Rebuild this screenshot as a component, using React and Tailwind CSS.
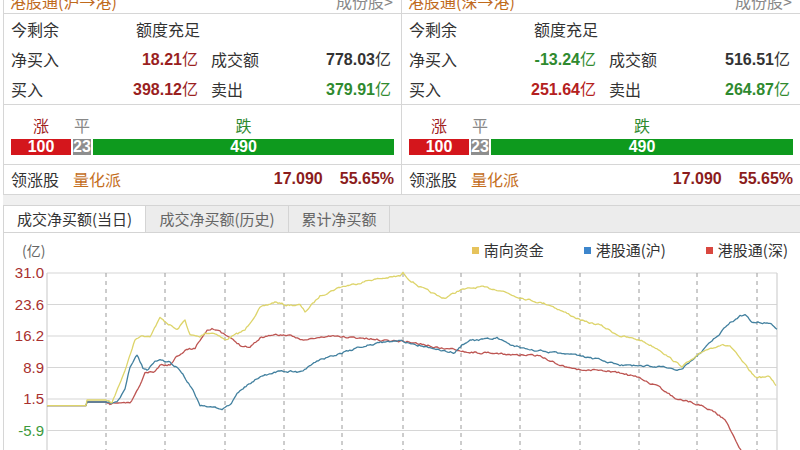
import React from "react";

const CJK = "font-['Noto_Sans_CJK_SC','Noto_Sans',sans-serif]";
const NUM = "font-['Liberation_Sans',Arial,sans-serif] font-bold";

const panels = [
  {
    title: "港股通(沪→港)",
    net: { v: "18.21", c: "text-[#9a1f1f]" },
    turnover: "778.03",
    buy: { v: "398.12", c: "text-[#9a1f1f]" },
    sell: { v: "379.91", c: "text-[#2f8a2f]" },
    border: "border-l border-r",
  },
  {
    title: "港股通(深→港)",
    net: { v: "-13.24", c: "text-[#2f8a2f]" },
    turnover: "516.51",
    buy: { v: "251.64", c: "text-[#b42020]" },
    sell: { v: "264.87", c: "text-[#2f8a2f]" },
    border: "",
  },
];

function Amount({ value, color }) {
  return (
    <span className={`${color} whitespace-nowrap`}>
      <span className={NUM}>{value}</span>
      <span className={CJK}>亿</span>
    </span>
  );
}

function Panel({ p, width }) {
  return (
    <div className={`${width} ${p.border} border-[#d6d6d6] flex flex-col text-[16px] text-[#333] ${CJK}`}>
      {/* title row, scrolled partly out of view */}
      <div className="h-[14px] overflow-hidden border-b border-[#d6d6d6]">
        <div className="-mt-[10px] h-[22px] leading-[22px] flex justify-between pl-[6px] pr-[8px]">
          <span className="text-[#c06a1c]">{p.title}</span>
          <span className="text-[#888]">成份股&gt;</span>
        </div>
      </div>

      <div className="pl-[7px] pr-[10px]">
        <div className="h-[30px] flex items-center">
          <span className="w-[125px]">今剩余</span>
          <span>额度充足</span>
        </div>
        <div className="h-[30px] flex items-center">
          <span className="w-[125px]">净买入</span>
          <span className="w-[62px] text-right">
            <Amount value={p.net.v} color={p.net.c} />
          </span>
          <span className="ml-[13px]">成交额</span>
          <span className="flex-1 text-right">
            <Amount value={p.turnover} color="text-[#333]" />
          </span>
        </div>
        <div className="h-[30px] flex items-center">
          <span className="w-[100px]">买入</span>
          <span className="w-[87px] text-right">
            <Amount value={p.buy.v} color={p.buy.c} />
          </span>
          <span className="ml-[13px]">卖出</span>
          <span className="flex-1 text-right">
            <Amount value={p.sell.v} color={p.sell.c} />
          </span>
        </div>
      </div>

      <div className="h-[61px] border-t border-b border-[#d6d6d6] pl-[7px] pr-[7px] pt-[8px]">
        <div className="flex gap-[2px] h-[24px] items-center">
          <span className="w-[60px] text-center text-[#a02020]">涨</span>
          <span className="w-[18px] text-center text-[#888]">平</span>
          <span className="flex-1 text-center text-[#2f8a2f]">跌</span>
        </div>
        <div className={`flex gap-[2px] h-[16px] mt-[2px] text-white text-[16px] leading-[16px] ${NUM}`}>
          <span className="w-[60px] bg-[#d4161c] text-center">100</span>
          <span className="w-[18px] bg-[#8e8e8e] text-center">23</span>
          <span className="flex-1 bg-[#0e9a1e] text-center">490</span>
        </div>
      </div>

      <div className="h-[27px] flex items-center pl-[7px] pr-[7px]">
        <span className="w-[62px]">领涨股</span>
        <span className="text-[#c46f1e]">量化派</span>
        <span className={`ml-auto text-[#8b1c1c] ${NUM}`}>17.090</span>
        <span className={`ml-[17px] text-[#8b1c1c] ${NUM}`}>55.65%</span>
      </div>
    </div>
  );
}

// chart geometry, in page pixels
const PLOT_L = 47;
const PLOT_R = 777;
const gridY = [273, 304.5, 336, 367.5, 399, 430.5];
const yLabels = ["31.0", "23.6", "16.2", "8.9", "1.5", "-5.9"];
const vDash = [106, 165, 225, 284, 342, 403, 461, 520, 580, 639, 697, 757];

const yellowKeys = [
  [47, 405.7], [86, 405.7], [87, 400], [106, 400], [112, 403], [125, 370], [135, 340], [140, 336],
  [150, 336], [160, 318], [170, 325], [177, 330], [185, 320], [190, 335], [200, 337], [205, 333],
  [215, 333], [225, 340], [235, 335], [245, 330], [260, 308], [275, 302], [285, 305], [300, 305],
  [305, 312], [320, 296], [340, 287], [355, 284], [370, 280], [385, 278], [400, 276], [403, 273],
  [410, 280], [420, 287], [440, 297], [445, 298], [460, 290], [480, 287], [500, 290], [515, 296],
  [530, 300], [550, 305], [570, 315], [585, 322], [600, 325], [620, 336], [640, 340], [660, 350],
  [675, 362], [682, 366], [695, 358], [705, 350], [720, 345], [730, 346], [745, 365], [755, 377],
  [770, 377], [776, 385],
];

const blueKeys = [
  [47, 405.7], [86, 405.7], [87, 402], [106, 402], [110, 403], [117, 402], [125, 390], [130, 368],
  [137, 355], [143, 368], [147, 370], [155, 362], [160, 360], [170, 362], [180, 370], [190, 385],
  [200, 405], [215, 408], [222, 410], [230, 405], [240, 390], [255, 380], [265, 375], [280, 371],
  [300, 372], [320, 360], [345, 352], [360, 347], [385, 342], [400, 340], [410, 343], [430, 348],
  [455, 353], [462, 345], [470, 340], [480, 340], [497, 338], [510, 345], [530, 350], [550, 352],
  [580, 356], [600, 360], [620, 365], [650, 366], [670, 368], [680, 370], [690, 362], [700, 353],
  [715, 338], [730, 323], [740, 316], [745, 315], [752, 322], [770, 323], [777, 330],
];

const redKeys = [
  [47, 405.7], [86, 405.7], [87, 402], [106, 402], [110, 405], [115, 403], [130, 403], [135, 395],
  [140, 385], [145, 373], [155, 372], [160, 365], [170, 365], [175, 358], [185, 350], [195, 348],
  [200, 340], [207, 330], [212, 328], [220, 332], [230, 338], [240, 345], [250, 347], [260, 338],
  [270, 335], [285, 335], [305, 340], [330, 336], [360, 338], [380, 340], [400, 341], [410, 342],
  [440, 348], [460, 350], [467, 352], [500, 354], [520, 355], [540, 356], [560, 365], [580, 370],
  [600, 370], [620, 373], [640, 378], [660, 388], [675, 398], [690, 402], [700, 405], [715, 412],
  [725, 420], [733, 435], [742, 452],
];

function makeRand(seed) {
  let s = seed;
  return () => {
    s = (s * 16807) % 2147483647;
    return s / 2147483647 - 0.5;
  };
}

function linePath(keys, seed) {
  const r = makeRand(seed);
  let d = `M${keys[0][0]} ${keys[0][1]}`;
  let n = 0;
  for (let i = 0; i < keys.length - 1; i++) {
    const [x0, y0] = keys[i];
    const [x1, y1] = keys[i + 1];
    const steps = Math.max(1, Math.round((x1 - x0) / 1.5));
    for (let k = 1; k <= steps; k++) {
      const t = k / steps;
      const x = x0 + (x1 - x0) * t;
      let y = y0 + (y1 - y0) * t;
      if (x > 108) {
        n = n * 0.5 + r() * 1.6;
        y += n;
      }
      d += ` L${x.toFixed(1)} ${y.toFixed(1)}`;
    }
  }
  return d;
}

const series = [
  { keys: redKeys, color: "#bd5552", seed: 11 },
  { keys: blueKeys, color: "#42809f", seed: 29 },
  { keys: yellowKeys, color: "#ddd46a", seed: 7 },
];

function Chart() {
  return (
    <svg width="800" height="182" viewBox="0 268 800 182" className="block">
      {gridY.map((y) => (
        <line key={y} x1={PLOT_L} x2={PLOT_R} y1={y} y2={y} stroke="#d6d6d6" strokeWidth="1.2" />
      ))}
      {vDash.map((x) => (
        <line key={x} x1={x} x2={x} y1={273} y2={450} stroke="#9a9a9a" strokeWidth="1" strokeDasharray="4 4" />
      ))}
      <line x1={PLOT_L} x2={PLOT_L} y1={273} y2={450} stroke="#d0d0d0" strokeWidth="1.2" />
      <line x1={PLOT_R} x2={PLOT_R} y1={273} y2={450} stroke="#d0d0d0" strokeWidth="1.2" />
      {yLabels.map((t, i) => (
        <text
          key={t}
          x="44"
          y={gridY[i] + 5}
          textAnchor="end"
          fontSize="15"
          fontFamily="'Liberation Sans', Arial, sans-serif"
          fill={t.startsWith("-") ? "#3c9a3c" : "#a8302e"}
        >
          {t}
        </text>
      ))}
      {series.map((s) => (
        <path key={s.color} d={linePath(s.keys, s.seed)} fill="none" stroke={s.color} strokeWidth="1.3" strokeLinejoin="round" />
      ))}
    </svg>
  );
}

function LegendItem({ color, label }) {
  return (
    <span className="flex items-center">
      <span className={`w-[7px] h-[7px] ${color}`} />
      <span className="ml-[5px]">{label}</span>
    </span>
  );
}

export default function App() {
  return (
    <div className="w-[800px] h-[450px] overflow-hidden bg-white pl-[3px]">
      <div className="flex h-[195px] border-b border-[#d6d6d6]">
        <Panel p={panels[0]} width="w-[399px]" />
        <Panel p={panels[1]} width="w-[398px]" />
      </div>
      <div className="h-[10px] bg-[#f0f0f0]" />

      <div className={`h-[28px] flex bg-[#ececec] border-t border-b border-[#d4d4d4] text-[15px] leading-[26px] ${CJK}`}>
        <div className="w-[143px] bg-white text-center text-[#333] border-l border-r border-[#d4d4d4]">成交净买额(当日)</div>
        <div className="w-[143px] text-center text-[#666] border-r border-[#d4d4d4]">成交净买额(历史)</div>
        <div className="w-[101px] text-center text-[#666] border-r border-[#d4d4d4]">累计净买额</div>
      </div>

      <div className="border-l border-[#d6d6d6]">
        <div className={`h-[35px] flex items-center text-[15px] text-[#333] ${CJK}`}>
          <span className="ml-[18px] text-[#666] text-[14px]">(亿)</span>
          <div className="ml-auto mr-[12px] flex gap-[40px]">
            <LegendItem color="bg-[#e6c35c]" label="南向资金" />
            <LegendItem color="bg-[#3d86cc]" label="港股通(沪)" />
            <LegendItem color="bg-[#d9473f]" label="港股通(深)" />
          </div>
        </div>
        <div className="-ml-[4px]">
          <Chart />
        </div>
      </div>
    </div>
  );
}
